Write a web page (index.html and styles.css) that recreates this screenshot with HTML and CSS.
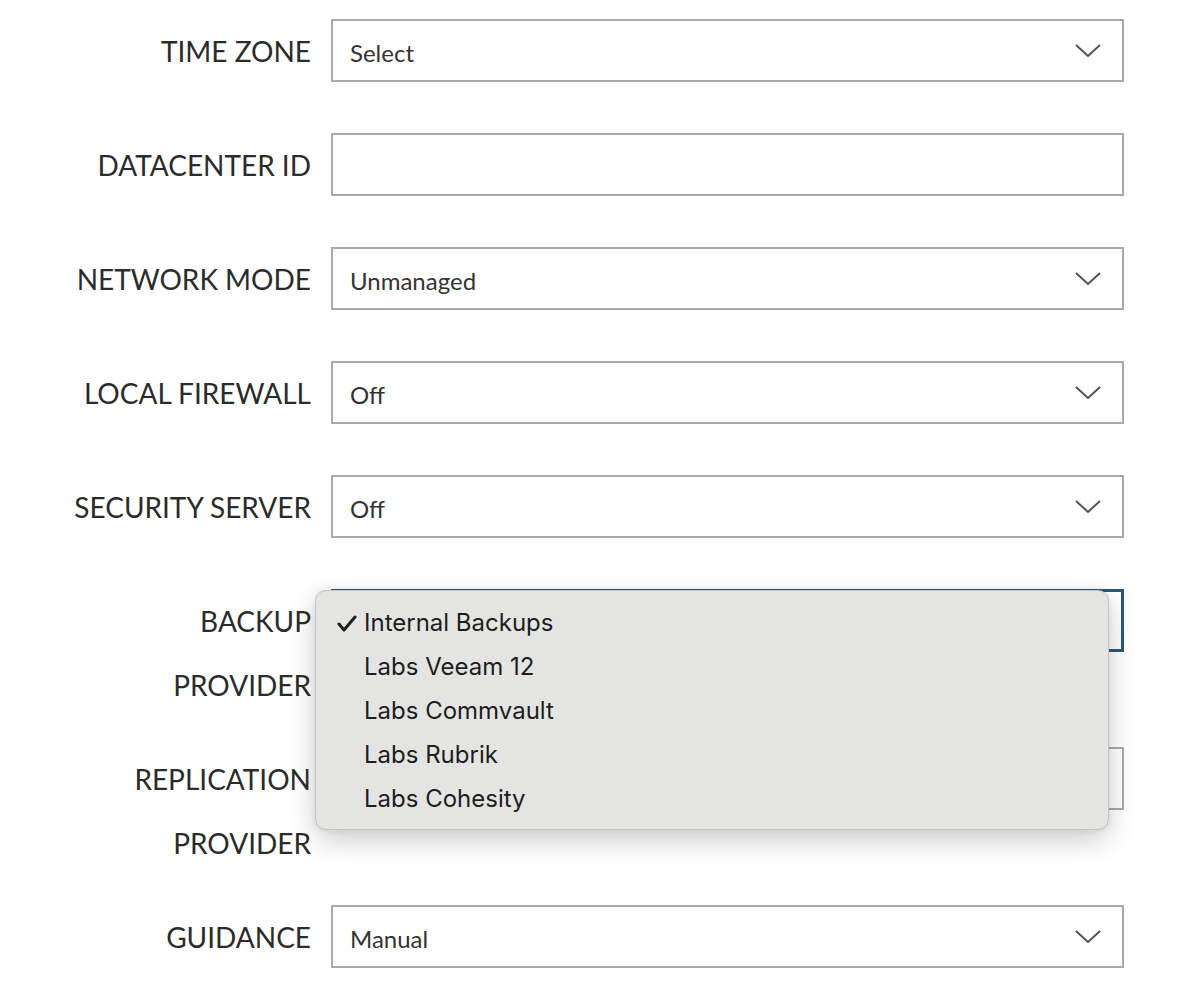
FILE: index.html
```html
<!DOCTYPE html>
<html lang="en">
<head>
<meta charset="utf-8">
<title>Settings</title>
<link rel="stylesheet" href="styles.css">
</head>
<body>
<form class="form">
  <div class="row">
    <label class="label">TIME ZONE</label>
    <div class="select"><span class="value">Select</span><svg class="chev" viewBox="0 0 26 13" width="26" height="13"><polyline points="1,1 13,12 25,1"/></svg></div>
  </div>
  <div class="row">
    <label class="label">DATACENTER ID</label>
    <div class="input"></div>
  </div>
  <div class="row">
    <label class="label">NETWORK MODE</label>
    <div class="select"><span class="value">Unmanaged</span><svg class="chev" viewBox="0 0 26 13" width="26" height="13"><polyline points="1,1 13,12 25,1"/></svg></div>
  </div>
  <div class="row">
    <label class="label">LOCAL FIREWALL</label>
    <div class="select"><span class="value">Off</span><svg class="chev" viewBox="0 0 26 13" width="26" height="13"><polyline points="1,1 13,12 25,1"/></svg></div>
  </div>
  <div class="row">
    <label class="label">SECURITY SERVER</label>
    <div class="select"><span class="value">Off</span><svg class="chev" viewBox="0 0 26 13" width="26" height="13"><polyline points="1,1 13,12 25,1"/></svg></div>
  </div>
  <div class="row">
    <label class="label">BACKUP<br>PROVIDER</label>
    <div class="field">
      <div class="select select--focus"></div>
      <ul class="popup">
        <li class="option option--checked"><svg class="check" viewBox="0 0 20 17" width="20" height="17"><polyline points="2,9 7,15 18,2"/></svg>Internal Backups</li>
        <li class="option">Labs Veeam 12</li>
        <li class="option">Labs Commvault</li>
        <li class="option">Labs Rubrik</li>
        <li class="option">Labs Cohesity</li>
      </ul>
    </div>
  </div>
  <div class="row">
    <label class="label">REPLICATION<br>PROVIDER</label>
    <div class="select"></div>
  </div>
  <div class="row">
    <label class="label">GUIDANCE</label>
    <div class="select"><span class="value">Manual</span><svg class="chev" viewBox="0 0 26 13" width="26" height="13"><polyline points="1,1 13,12 25,1"/></svg></div>
  </div>
</form>
</body>
</html>
```

FILE: styles.css
```css
html, body {
  margin: 0;
  padding: 0;
  background: #ffffff;
}

body {
  font-family: "Lato", "Open Sans", sans-serif;
  color: #222222;
}

.form {
  padding-top: 19px;
}

.row {
  display: grid;
  grid-template-columns: 311px 793px;
  column-gap: 20px;
  margin-bottom: 51px;
  align-items: start;
}

.label {
  font-size: 28px;
  font-weight: 400;
  line-height: 64px;
  text-align: right;
  color: #2b2b2b;
  margin-bottom: -21px;
}

.field {
  position: relative;
}

.select,
.input {
  box-sizing: border-box;
  height: 63px;
  border: 2px solid #a9a9a9;
  background: #fff;
  display: flex;
  align-items: center;
  justify-content: space-between;
  padding: 3px 21px 0 17px;
}

.value {
  font-size: 24px;
  font-weight: 400;
  color: #333;
}

.chev {
  margin-top: -3px;
  fill: none;
  stroke: #555;
  stroke-width: 2;
}

.select--focus {
  border: 3px solid #2b5879;
}

.popup {
  position: absolute;
  left: -16px;
  top: 1px;
  width: 794px;
  height: 240px;
  box-sizing: border-box;
  margin: 0;
  padding: 10px 0;
  list-style: none;
  background: #e4e5e3;
  border: 1px solid #c4c5c3;
  border-radius: 11px;
  box-shadow: 0 10px 28px rgba(0, 0, 0, 0.2), 0 0 6px rgba(0, 0, 0, 0.08);
  font-family: "Inter", "Roboto", sans-serif;
}

.option {
  position: relative;
  height: 44px;
  line-height: 44px;
  padding-left: 48px;
  font-size: 24px;
  font-weight: 400;
  color: #1d1d1d;
}

.check {
  position: absolute;
  left: 21px;
  top: 14px;
  fill: none;
  stroke: #1f1f1f;
  stroke-width: 3;
  stroke-linecap: round;
  stroke-linejoin: round;
}
```
